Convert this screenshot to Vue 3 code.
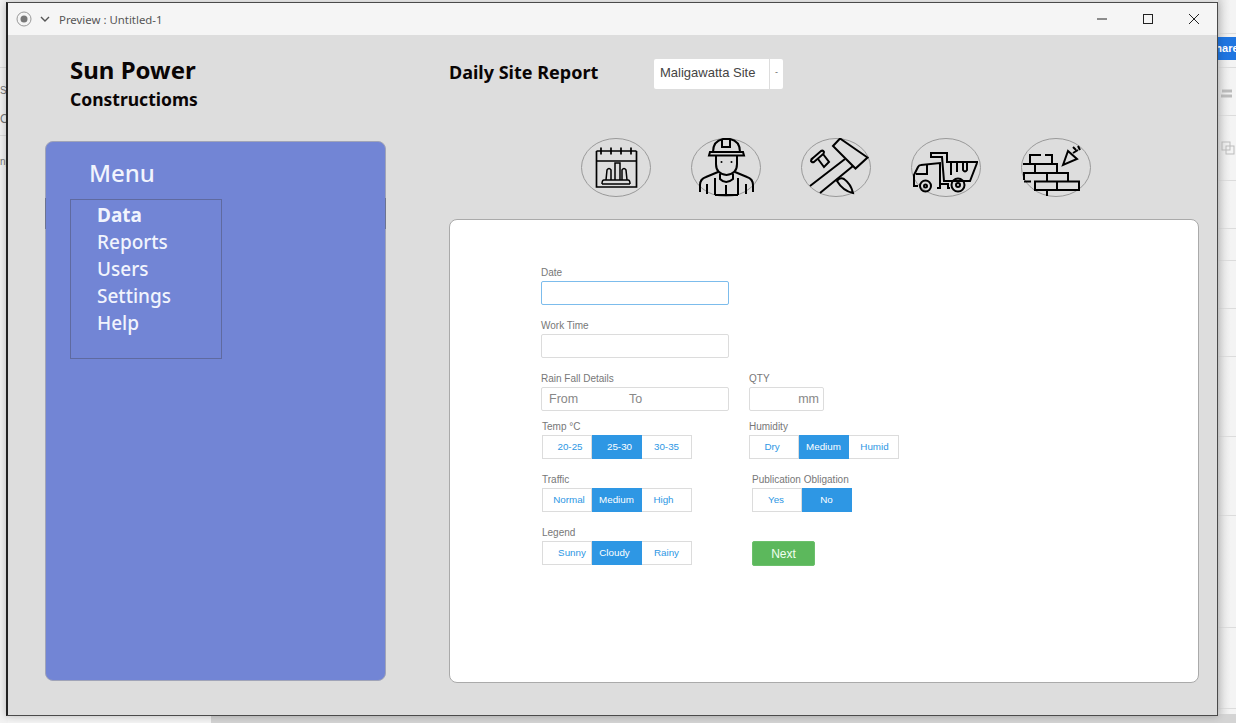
<template>
  <div class="desktop">
    <div class="backdrop-left">
      <span class="frag frag-se">SE</span>
      <span class="frag frag-o">O</span>
      <span class="frag frag-np">np</span>
      <i v-for="y in leftLines" :key="y" class="line" :style="{ top: y + 'px' }"></i>
    </div>
    <div class="backdrop-right">
      <span class="share">Share</span>
      <i v-for="y in rightLines" :key="y" class="line" :style="{ top: y + 'px' }"></i>
      <svg class="side-icon icon-a" viewBox="0 0 14 10"><path d="M1 2h10M0 7h11" stroke="#bbb" stroke-width="3" fill="none"/></svg>
      <svg class="side-icon icon-b" viewBox="0 0 14 14"><rect x="1" y="1" width="8" height="8" fill="none" stroke="#bbb"/><rect x="5" y="5" width="8" height="8" fill="none" stroke="#bbb"/></svg>
    </div>
    <div class="backdrop-bottom"></div>

    <section class="window">
      <header class="titlebar">
        <svg class="record" viewBox="0 0 16 16">
          <circle cx="8" cy="8" r="7" fill="none" stroke="#999" stroke-width="1"/>
          <circle cx="8" cy="8" r="3.5" fill="#777"/>
        </svg>
        <svg class="chevron" viewBox="0 0 10 6">
          <path d="M1 1l4 4 4-4" fill="none" stroke="#555" stroke-width="1.4"/>
        </svg>
        <span class="title">Preview : Untitled-1</span>
        <div class="win-controls">
          <svg viewBox="0 0 12 12"><path d="M1 6h10" stroke="#222" fill="none"/></svg>
          <svg viewBox="0 0 12 12"><rect x="1.5" y="1.5" width="9" height="9" stroke="#222" fill="none"/></svg>
          <svg viewBox="0 0 12 12"><path d="M1 1l10 10M11 1L1 11" stroke="#222" fill="none"/></svg>
        </div>
      </header>

      <div class="content">
        <aside class="left-col">
          <div class="brand">
            <div class="brand-name">Sun Power</div>
            <div class="brand-sub">Constructioms</div>
          </div>
          <nav class="sidebar">
            <h2 class="menu-title">Menu</h2>
            <ul class="menu-box">
              <li v-for="(item, i) in menu" :key="item" :class="{ active: i === 0 }">{{ item }}</li>
            </ul>
          </nav>
        </aside>

        <main class="right-col">
          <div class="top-row">
            <h1 class="report-title">Daily Site Report</h1>
            <div class="site-select">
              <span class="site-name">Maligawatta Site</span>
              <span class="site-caret">-</span>
            </div>
          </div>

          <div class="icon-row">
            <!-- calendar -->
            <svg class="round-icon" viewBox="0 0 70 60">
              <ellipse class="ring" cx="35" cy="29.5" rx="34.5" ry="29"/>
              <g class="ink">
                <path d="M15.500 13v36h40V13M15.500 23h40M15.500 13h40" stroke-width="1.700"/>
                <path d="M20 9.500v7M30 9.500v7M40 9.500v7M50 9.500v7" stroke-width="1.700"/>
                <path d="M21 46h28M23 42h24q2 0 2 4M23 42q-2 0-2 4" stroke-width="1.500"/>
                <path d="M25 42l1-10q2-3 4 0v10M34 42V25h5v17M41 42V32q2-3 4 0l1 10" stroke-width="1.500"/>
              </g>
            </svg>
            <!-- worker -->
            <svg class="round-icon" viewBox="0 0 70 60">
              <ellipse class="ring" cx="35" cy="29.5" rx="34.5" ry="29"/>
              <g class="ink">
                <path d="M22 14q0-11 10-13h7q10 2 10 13"/>
                <path d="M31 1v8h8V1"/>
                <path d="M19 14h33l1 3.500H18z"/>
                <path d="M25 18v8q0 10 10.500 11q10.500-1 10.500-11v-8"/>
                <path d="M29 36v5q6 6 13 0v-5"/>
                <path d="M9 54v-7q0-6 6-8l12-5M62 54v-7q0-6-6-8l-12-5"/>
                <path d="M16 46v10M55 46v10M24 40v17M47 40v17M24 57h23"/>
                <path d="M35 47v10"/>
              </g>
              <circle cx="30.500" cy="24" r="1" fill="#000"/>
              <circle cx="40.500" cy="24" r="1" fill="#000"/>
            </svg>
            <!-- hammer and nail -->
            <svg class="round-icon" viewBox="0 0 70 60">
              <ellipse class="ring" cx="35" cy="29.5" rx="34.5" ry="29"/>
              <g class="ink">
                <path d="M32 8l7-7.500 27.500 19-12 11z"/>
                <path d="M9 48l35-27M19 55l33-27"/>
                <path d="M10 23q0-2 2-3l8-7q2-1 3 1 0 2-2 3l-8 7q-2 1-3-1z"/>
                <path d="M17 21l6 8 5-5-6-8"/>
                <path d="M36 43q3-4 7-2 7 5 9 14-10-2-16-12z"/>
              </g>
            </svg>
            <!-- dump truck -->
            <svg class="round-icon" viewBox="0 0 70 60">
              <ellipse class="ring" cx="35" cy="29.5" rx="34.5" ry="29"/>
              <g class="ink">
                <path d="M19 15h17v9h31"/>
                <path d="M20 15v4h11l2 24h26l7-18"/>
                <path d="M40 25v12M46 25v9M52 25v7q2 3 4 0v-7"/>
                <path d="M3 43v-6l4-8q1-2 3-2l19-2v25h-3"/>
                <path d="M5 36h11v-10"/>
                <path d="M3 43v5h4M29 46h8v4h2"/>
                <circle cx="14.500" cy="48" r="5.500"/>
                <circle cx="47" cy="47" r="6.500"/>
                <circle cx="47" cy="47" r="2"/>
                <circle cx="14.500" cy="48" r="1.500"/>
              </g>
            </svg>
            <!-- bricks -->
            <svg class="round-icon" viewBox="0 0 70 60">
              <ellipse class="ring" cx="35" cy="29.5" rx="34.5" ry="29"/>
              <g class="ink">
                <path d="M9 26v-9h11M24 17h7v9"/>
                <path d="M2 26h34v9M14 26v9"/>
                <path d="M2 35h45v8.500M26 35v8.500"/>
                <path d="M3 35v7M3 43.500h7M14 43.500h44v8.500H14zM36 43.500v8.500M26 52v6"/>
                <path d="M42 27l5-14 9 8zM52 15l5-3M52 9l3 3M57 8l2 4"/>
              </g>
            </svg>
          </div>

          <form class="panel" @submit.prevent>
            <div class="form-row">
              <div class="field">
                <label>Date</label>
                <input class="text-input focused" type="text" />
              </div>
            </div>
            <div class="form-row">
              <div class="field">
                <label>Work Time</label>
                <input class="text-input" type="text" />
              </div>
            </div>
            <div class="form-row rain-row">
              <div class="field">
                <label>Rain Fall Details</label>
                <div class="text-input rain"><span class="from">From</span><span>To</span></div>
              </div>
              <div class="field field-qty">
                <label>QTY</label>
                <div class="text-input qty">mm</div>
              </div>
            </div>
            <div v-for="row in segRows" :key="row[0].label" class="form-row">
              <div v-for="g in row" :key="g.label" class="field" :class="g.cls">
                <label v-if="g.label">{{ g.label }}</label>
                <div v-if="g.options" class="seg">
                  <button
                    v-for="opt in g.options"
                    :key="opt.t"
                    type="button"
                    class="seg-btn"
                    :class="{ on: opt.t === g.value }"
                    :style="{ textIndent: opt.s + 'px' }"
                  >{{ opt.t }}</button>
                </div>
                <button v-if="g.next" type="button" class="next">Next</button>
              </div>
            </div>
          </form>
        </main>
      </div>
    </section>
  </div>
</template>

<script setup>
const menu = ['Data', 'Reports', 'Users', 'Settings', 'Help']
const leftLines = [67, 135]
const rightLines = [33, 67, 115, 180, 228, 260, 308, 356, 436, 515, 627, 708]

// s nudges the label inside its button, the original isn't centred
const segRows = [
  [
    { label: 'Temp °C', cls: 'inset', value: '25-30', options: [{ t: '20-25', s: 6 }, { t: '25-30', s: 6 }, { t: '30-35', s: 0 }] },
    { label: 'Humidity', value: 'Medium', options: [{ t: 'Dry', s: -4 }, { t: 'Medium', s: 0 }, { t: 'Humid', s: 2 }] }
  ],
  [
    { label: 'Traffic', cls: 'inset', value: 'Medium', options: [{ t: 'Normal', s: 4 }, { t: 'Medium', s: 0 }, { t: 'High', s: -6 }] },
    { label: 'Publication Obligation', cls: 'nudge', value: 'No', options: [{ t: 'Yes', s: -2 }, { t: 'No', s: 0 }] }
  ],
  [
    { label: 'Legend', cls: 'inset', value: 'Cloudy', options: [{ t: 'Sunny', s: 10 }, { t: 'Cloudy', s: -4 }, { t: 'Rainy', s: 0 }] },
    { label: '', next: true, cls: 'nudge next-cell' }
  ]
]
</script>

<style>
html, body {
  margin: 0;
  background: #f2f2f2;
}
</style>

<style scoped>
.desktop {
  position: relative;
  width: 1236px;
  height: 723px;
  overflow: hidden;
  background: #f4f4f4;
  font-family: "Liberation Sans", Arial, sans-serif;
}

.backdrop-left {
  position: absolute;
  left: 0;
  top: 0;
  width: 8px;
  height: 723px;
  background: #f2f2f2;
}

.backdrop-right {
  position: absolute;
  left: 1218px;
  top: 0;
  width: 18px;
  height: 723px;
  background: linear-gradient(90deg, #dedede, #f4f4f4 70%);
}

.backdrop-bottom {
  position: absolute;
  left: 211px;
  top: 714px;
  width: 1025px;
  height: 9px;
  background: #d4d4d4;
}

.line {
  position: absolute;
  left: 0;
  right: 0;
  height: 1px;
  background: #dcdcdc;
}

.frag {
  position: absolute;
  left: 0;
  color: #777;
  font-size: 10px;
}

.frag-se { top: 85px; }
.frag-o { top: 112px; font-size: 12px; }
.frag-np { top: 156px; }

.share {
  position: absolute;
  left: 0;
  top: 37px;
  width: 18px;
  height: 23px;
  overflow: hidden;
  background: #1f75e0;
  color: #fff;
  font-size: 11px;
  font-weight: 700;
  line-height: 23px;
  text-indent: -10px;
  white-space: nowrap;
}

.side-icon {
  position: absolute;
  left: 3px;
  width: 14px;
  height: 14px;
}

.icon-a { top: 87px; }
.icon-b { top: 141px; }

.window {
  position: absolute;
  left: 6px;
  top: 2px;
  width: 1209px;
  height: 712px;
  display: flex;
  flex-direction: column;
  background: #ddd;
  border: 1px solid #4a4a4a;
  border-left: 2px solid #222;
  box-shadow: 0 0 8px rgba(0, 0, 0, 0.25);
}

.titlebar {
  flex: none;
  height: 32px;
  display: flex;
  align-items: center;
  background: #f5f5f5;
  color: #555;
  padding-left: 8px;
}

.record {
  width: 16px;
  height: 16px;
}

.chevron {
  width: 10px;
  height: 6px;
  margin-left: 8px;
}

.title {
  margin-left: 9px;
  font: 11.400px "Noto Sans", sans-serif;
  color: #555;
}

.win-controls {
  margin-left: auto;
  display: flex;
  gap: 34px;
  padding-right: 17px;
}

.win-controls svg {
  width: 12px;
  height: 12px;
}

.content {
  flex: 1;
  display: flex;
  padding-left: 37px;
}

.left-col {
  flex: none;
  width: 341px;
}

.brand {
  height: 106px;
  padding: 18px 0 0 25px;
  box-sizing: border-box;
  color: #0a0505;
  font-family: "Noto Sans", sans-serif;
  font-weight: 700;
}

.brand-name {
  font-size: 24px;
  line-height: 34px;
}

.brand-sub {
  font-size: 17.500px;
  line-height: 24px;
}

.sidebar {
  position: relative;
  box-sizing: border-box;
  height: 540px;
  padding: 12px 0 0 24px;
  background: #7285d5;
  border: 1px solid #a0a4b8;
  border-radius: 8px;
}

/* darker bits of the edge next to the menu box */
.sidebar::before,
.sidebar::after {
  content: '';
  position: absolute;
  top: 56px;
  width: 1px;
  height: 31px;
  background: #6d7490;
}

.sidebar::before { left: -1px; }
.sidebar::after { right: -1px; }

.menu-title {
  margin: 0 0 7px 19px;
  color: #f1f4fd;
  font: 500 24px/38px "Noto Sans", sans-serif;
}

.menu-box {
  box-sizing: border-box;
  width: 152px;
  height: 160px;
  margin: 0;
  padding: 2px 0 0 26px;
  list-style: none;
  border: 1px solid #5f6aa0;
  color: #f1f4fd;
  font: 500 19px/27px "Noto Sans", sans-serif;
}

.menu-box .active {
  font-weight: 700;
}

.right-col {
  flex: none;
  width: 750px;
  margin-left: 63px;
}

.top-row {
  height: 103px;
  display: flex;
  align-items: flex-start;
  padding-top: 23px;
  box-sizing: border-box;
}

.report-title {
  margin: 0;
  width: 205px;
  color: #0a0505;
  font: 700 18px/28px "Noto Sans", sans-serif;
}

.site-select {
  display: flex;
  width: 129px;
  height: 30px;
  margin-top: 1px;
  background: #fff;
  border-radius: 2px;
  color: #444;
  font-size: 13px;
  line-height: 27px;
}

.site-name {
  flex: 1;
  padding-left: 6px;
  white-space: nowrap;
}

.site-caret {
  width: 13px;
  border-left: 1px solid #ddd;
  color: #666;
  text-align: center;
  font-size: 9px;
}

.icon-row {
  display: flex;
  gap: 40px;
  height: 81px;
  padding-left: 132px;
}

.round-icon {
  width: 70px;
  height: 60px;
  overflow: hidden;
}

.ring {
  fill: none;
  stroke: #999;
  stroke-width: 1;
}

.ink {
  fill: none;
  stroke: #000;
  stroke-width: 2;
}

.panel {
  box-sizing: border-box;
  width: 750px;
  height: 464px;
  padding: 48px 0 0 91px;
  background: #fff;
  border: 1px solid #aaa;
  border-radius: 8px;
}

.form-row {
  display: flex;
  gap: 20px;
  height: 53px;
}

.rain-row {
  height: 48px;
}

.field {
  box-sizing: border-box;
  width: 188px;
}

.field-qty {
  width: 75px;
}

.field label {
  display: block;
  height: 13px;
  color: #777;
  font-size: 10px;
  line-height: 9px;
  white-space: nowrap;
}

.text-input {
  display: block;
  box-sizing: border-box;
  width: 100%;
  height: 24px;
  margin: 0;
  padding: 0 7px;
  background: #fff;
  border: 1px solid #dcdcdc;
  border-radius: 2px;
  color: #888;
  font-size: 12.500px;
  line-height: 22px;
  outline: none;
}

.text-input.focused {
  border-color: #7cbcec;
}

.from {
  display: inline-block;
  width: 80px;
}

.qty {
  padding-right: 4px;
  text-align: right;
}

.inset {
  padding-left: 1px;
}

.nudge {
  padding-left: 3px;
}

.seg {
  display: flex;
}

.seg-btn {
  box-sizing: border-box;
  flex: none;
  width: 50px;
  height: 24px;
  margin: 0;
  padding: 0 0 2px;
  background: #fff;
  border: 1px solid #dcdcdc;
  border-left-width: 0;
  color: #2e97e4;
  font: 9.800px "Liberation Sans", Arial, sans-serif;
  text-align: center;
}

.seg-btn:first-child {
  border-left-width: 1px;
}

.seg-btn.on {
  background: #2e97e4;
  border-color: #2e97e4;
  color: #fff;
}

.next {
  display: block;
  width: 63px;
  height: 25px;
  padding: 0;
  background: #5cb85c;
  border: 1px solid #6cc06c;
  border-radius: 2px;
  color: #f0fff0;
  font: 12px "Liberation Sans", Arial, sans-serif;
}

.next-cell {
  padding-top: 13px;
}
</style>
